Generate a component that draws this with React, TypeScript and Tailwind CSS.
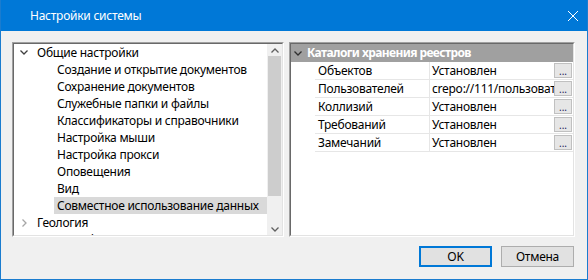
import React from "react";

const font = "font-['Noto_Sans',sans-serif]";

const children = [
  "Создание и открытие документов",
  "Сохранение документов",
  "Служебные папки и файлы",
  "Классификаторы и справочники",
  "Настройка мыши",
  "Настройка прокси",
  "Оповещения",
  "Вид",
  "Совместное использование данных",
];

const props = [
  { name: "Объектов", value: "Установлен" },
  { name: "Пользователей", value: "crepo://111/пользователи" },
  { name: "Коллизий", value: "Установлен" },
  { name: "Требований", value: "Установлен" },
  { name: "Замечаний", value: "Установлен" },
];

function ChevronDown({ className }: { className?: string }) {
  return (
    <svg viewBox="0 0 8 5" className={className} fill="none" stroke="currentColor" strokeWidth="1.3">
      <path d="M0.5 0.5 4 4 7.5 0.5" />
    </svg>
  );
}

function ChevronRight({ className }: { className?: string }) {
  return (
    <svg viewBox="0 0 5 8" className={className} fill="none" stroke="currentColor" strokeWidth="1.3">
      <path d="M0.5 0.5 4 4 0.5 7.5" />
    </svg>
  );
}

function ChevronUp({ className }: { className?: string }) {
  return (
    <svg viewBox="0 0 8 5" className={className} fill="none" stroke="currentColor" strokeWidth="1.3">
      <path d="M0.5 4.5 4 1 7.5 4.5" />
    </svg>
  );
}

// sunken 3D frame used by both panels
function Sunken({ className, children }: { className?: string; children: React.ReactNode }) {
  return (
    <div className={`border border-t-[#a0a0a0] border-l-[#a0a0a0] border-r-white border-b-white ${className ?? ""}`}>
      <div className="h-full overflow-hidden border border-t-[#696969] border-l-[#696969] border-r-[#e3e3e3] border-b-[#e3e3e3] bg-white">
        {children}
      </div>
    </div>
  );
}

export default function App() {
  return (
    <div className={`flex h-[280px] w-[588px] flex-col border-x border-b border-[#1a7ccf] bg-[#f0f0f0] text-[12px] tracking-[-0.25px] text-black ${font}`}>
      <div className="flex h-[31px] shrink-0 items-center justify-between bg-[#0078d7] pl-[29px] pr-[9px] text-white">
        <span className="leading-none">Настройки системы</span>
        <svg viewBox="0 0 10 10" className="size-[10px]" stroke="white" strokeWidth="1">
          <path d="M0 0 10 10M10 0 0 10" />
        </svg>
      </div>

      <div className="flex flex-1 flex-col pl-[11px] pr-[11px] pt-[11px]">
        <div className="flex gap-[5px]">
          <Sunken className="h-[195px] w-[272px]">
            <div className="flex h-full">
              <div className="flex-1 overflow-hidden">
                <div className="flex h-[17px] items-center">
                  <ChevronDown className="ml-[6px] h-[5px] w-[8px] text-[#404040]" />
                  <span className="ml-[9px] whitespace-nowrap">Общие настройки</span>
                </div>
                {children.map((c, i) => (
                  <div key={c} className="flex h-[17px] items-center pl-[40px]">
                    <span className={`flex h-full flex-1 items-center whitespace-nowrap pl-[3px] ${i === children.length - 1 ? "bg-[#d9d9d9]" : ""}`}>
                      {c}
                    </span>
                  </div>
                ))}
                <div className="flex h-[17px] items-center">
                  <ChevronRight className="ml-[8px] h-[8px] w-[5px] text-[#a6a6a6]" />
                  <span className="ml-[10px] whitespace-nowrap">Геология</span>
                </div>
                <div className="flex h-[17px] items-center">
                  <ChevronRight className="ml-[8px] h-[8px] w-[5px] text-[#a6a6a6]" />
                  <span className="ml-[10px] whitespace-nowrap">Картография</span>
                </div>
              </div>

              <div className="flex w-[15px] shrink-0 flex-col bg-[#f0f0f0]">
                <div className="flex h-[12px] items-center justify-center">
                  <ChevronUp className="h-[5px] w-[8px] text-[#606060]" />
                </div>
                <div className="mx-[1px] h-[140px] bg-[#cdcdcd]" />
                <div className="flex-1" />
                <div className="flex h-[12px] items-center justify-center">
                  <ChevronDown className="h-[5px] w-[8px] text-[#606060]" />
                </div>
              </div>
            </div>
          </Sunken>

          <Sunken className="h-[195px] w-[286px]">
            <div className="flex h-[18px] items-center bg-[#a0a0a0] font-bold tracking-[-0.6px] text-white">
              <ChevronDown className="ml-[3px] h-[5px] w-[8px] text-[#303030]" />
              <span className="ml-[5px] whitespace-nowrap">Каталоги хранения реестров</span>
            </div>
            {props.map((p) => (
              <div key={p.name} className="flex h-[18px] pl-[24px]">
                <div className="flex min-w-0 flex-1 border-b border-[#e6e6e6]">
                  <span className="flex w-[115px] shrink-0 items-center border-r border-[#e6e6e6] pl-[3px] whitespace-nowrap">
                    {p.name}
                  </span>
                  <div className="flex min-w-0 flex-1 items-center">
                    <div className="min-w-0 flex-1 overflow-hidden pl-[2px]">
                      <span className="whitespace-nowrap">{p.value}</span>
                    </div>
                    <span className="mr-[1px] mt-[1px] flex h-[15px] w-[18px] shrink-0 items-end justify-center self-start border border-[#c0c0c0] bg-[#e6e6e6] pb-[1px] text-[10px] leading-none tracking-normal text-[#1a1a5a]">
                      ...
                    </span>
                  </div>
                </div>
              </div>
            ))}
          </Sunken>
        </div>

        <div className="mt-[9px] flex justify-end gap-[9px] pr-[2px]">
          <button type="button" className="flex h-[21px] w-[73px] items-center justify-center border-2 border-[#0078d7] bg-[#e1e1e1]">
            OK
          </button>
          <button type="button" className="flex h-[21px] w-[73px] items-center justify-center border border-[#adadad] bg-[#e1e1e1]">
            Отмена
          </button>
        </div>
      </div>
    </div>
  );
}
